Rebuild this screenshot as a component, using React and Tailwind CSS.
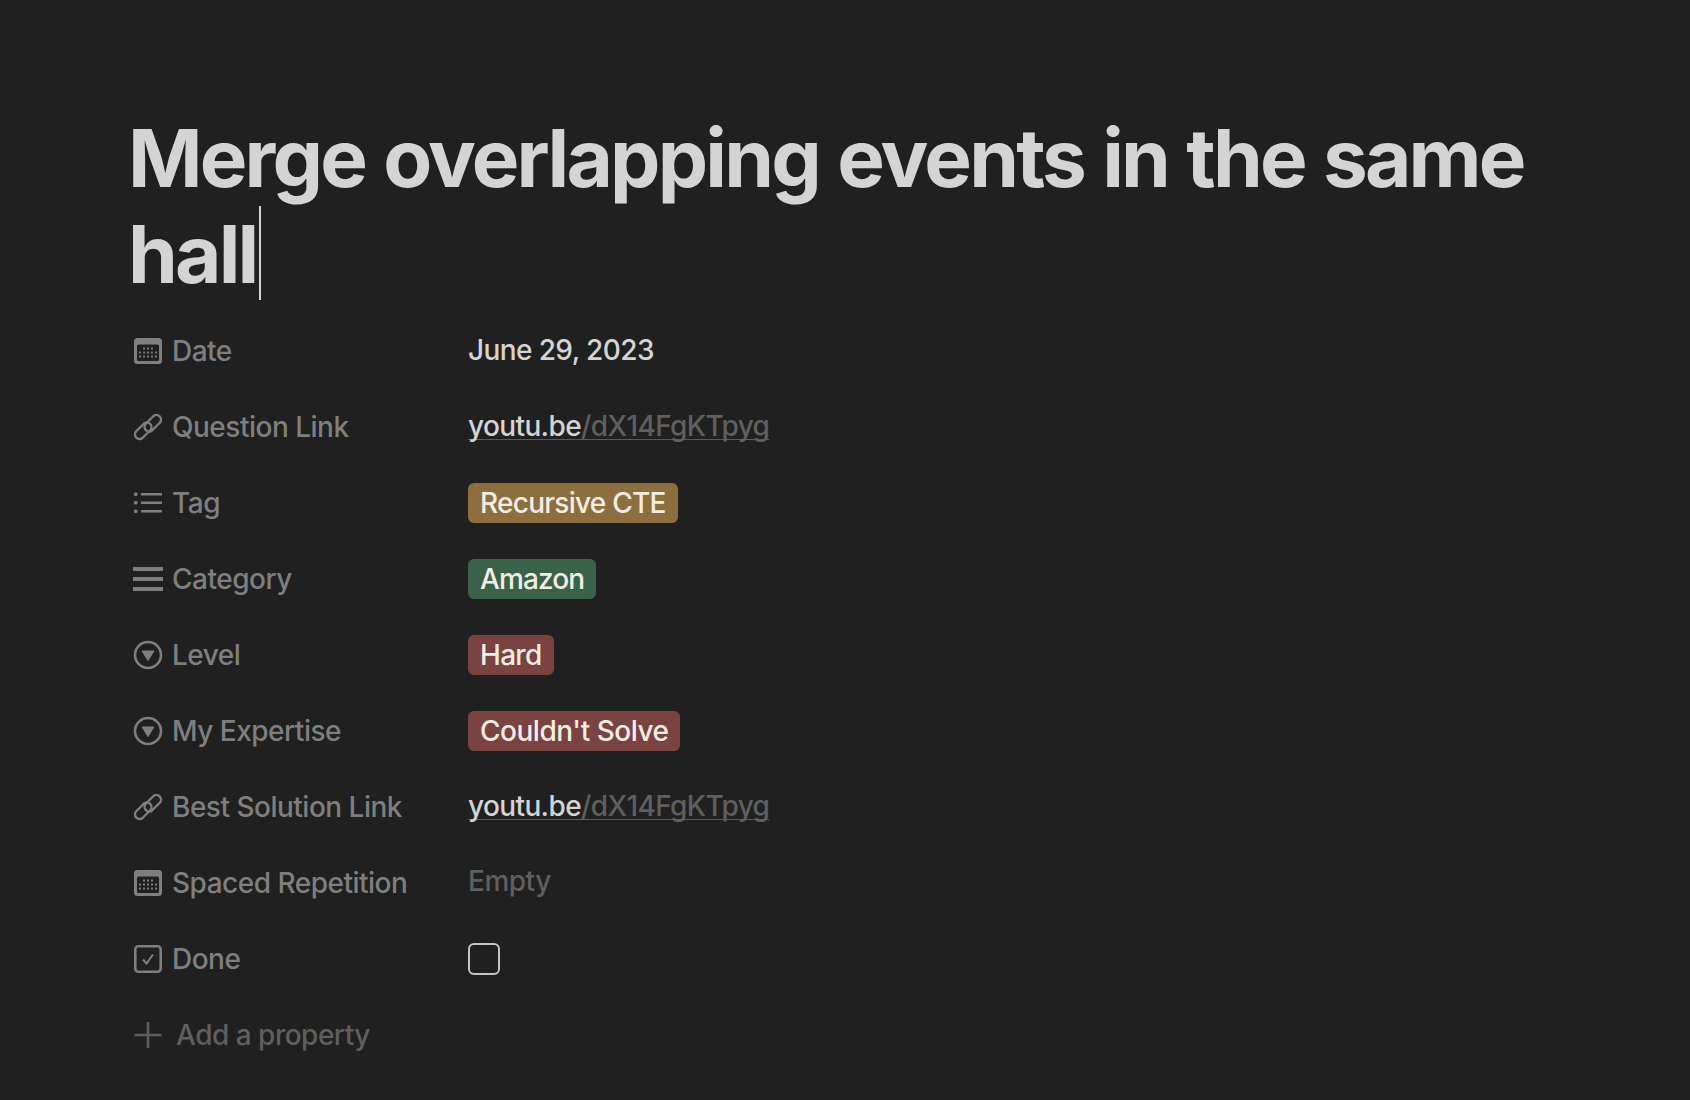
const CalendarIcon = () => (
  <svg width="30" height="28" viewBox="0 0 30 28" fill="none">
    <rect x="1" y="1" width="28" height="26" rx="3.5" fill="#7f7f7f" />
    <rect x="4" y="7.5" width="22" height="16.5" rx="1.5" fill="#202020" />
    {[11.5, 15.5, 19.5].map((y) =>
      [7, 11, 15, 19, 23].map((x) =>
        y === 11.5 && (x === 7 || x === 23) ? null : (
          <rect key={`${x}-${y}`} x={x - 1} y={y - 1} width="2" height="2" rx="0.5" fill="#7f7f7f" />
        )
      )
    )}
  </svg>
);

const LinkIcon = () => (
  <svg width="30" height="30" viewBox="0 0 30 30" fill="none" stroke="#7f7f7f" strokeWidth="2.4" strokeLinecap="round">
    <path d="M12.75 11.75 L20.25 4.25 A4.6 4.6 0 0 1 26.75 10.75 L19.25 18.25 A4.6 4.6 0 0 1 12.75 11.75 Z" />
    <path d="M3.25 19.25 L10.75 11.75 A4.6 4.6 0 0 1 17.25 18.25 L9.75 25.75 A4.6 4.6 0 0 1 3.25 19.25 Z" />
  </svg>
);

const ListIcon = () => (
  <svg width="30" height="22" viewBox="0 0 30 22" fill="#7f7f7f">
    <rect x="1" y="0.5" width="3.5" height="3.5" rx="1.2" />
    <rect x="1" y="9" width="3.5" height="3.5" rx="1.2" />
    <rect x="1" y="17.5" width="3.5" height="3.5" rx="1.2" />
    <rect x="8" y="1" width="21" height="2.5" />
    <rect x="8" y="9.5" width="21" height="2.5" />
    <rect x="8" y="18" width="21" height="2.5" />
  </svg>
);

const BarsIcon = () => (
  <svg width="30" height="24" viewBox="0 0 30 24" fill="#7f7f7f">
    <rect x="0" y="0" width="30" height="4" />
    <rect x="0" y="10" width="30" height="4" />
    <rect x="0" y="20" width="30" height="4" />
  </svg>
);

const SelectIcon = () => (
  <svg width="30" height="30" viewBox="0 0 30 30" fill="none">
    <circle cx="15" cy="15" r="13" stroke="#7f7f7f" strokeWidth="2.6" />
    <path d="M9 11 H21 L15 20.5 Z" fill="#7f7f7f" stroke="#7f7f7f" strokeLinejoin="round" />
  </svg>
);

const CheckIcon = () => (
  <svg width="30" height="28" viewBox="0 0 30 28" fill="none" stroke="#7f7f7f">
    <rect x="2.3" y="1.3" width="25.4" height="25.4" rx="3" strokeWidth="2.6" />
    <path d="M10 14.5 L13.5 18.5 L20 9.5" strokeWidth="2.1" />
  </svg>
);

const PlusIcon = () => (
  <svg width="30" height="28" viewBox="0 0 30 28" fill="none" stroke="#5f5f5f" strokeWidth="2.6">
    <path d="M1.5 14 H28.5 M15 1 V27" />
  </svg>
);

const Chip = ({ color, children }) => (
  <span className={`h-10 px-3 flex items-center rounded-[6px] text-[#f5ece4] ${color}`}>
    {children}
  </span>
);

const YoutuLink = () => (
  <span className="border-b border-[#5a5a5a] leading-[26px] h-[27px] -mt-px tracking-[-0.62px]">
    <span className="text-[#d4d4d4]">youtu.be</span>
    <span className="text-[#5f5f5f]">/dX14FgKTpyg</span>
  </span>
);

const rows = [
  { icon: <CalendarIcon />, label: "Date", value: <span className="text-[#d4d4d4] tracking-[-0.6px] -mt-0.5">June 29, 2023</span> },
  { icon: <LinkIcon />, label: "Question Link", value: <YoutuLink /> },
  { icon: <ListIcon />, label: "Tag", value: <Chip color="bg-[#8d6f3f] tracking-[-0.74px]">Recursive CTE</Chip> },
  { icon: <BarsIcon />, label: "Category", value: <Chip color="bg-[#3a6248] tracking-[-0.9px]">Amazon</Chip> },
  { icon: <SelectIcon />, label: "Level", value: <Chip color="bg-[#7a4240] tracking-[-0.7px]">Hard</Chip> },
  { icon: <SelectIcon />, label: "My Expertise", value: <Chip color="bg-[#7a4240] tracking-[-0.49px]">Couldn't Solve</Chip> },
  { icon: <LinkIcon />, label: "Best Solution Link", value: <YoutuLink /> },
  { icon: <CalendarIcon />, label: "Spaced Repetition", value: <span className="text-[#5f5f5f] -mt-1 tracking-[-0.5px]">Empty</span> },
  {
    icon: <CheckIcon />,
    label: "Done",
    value: <span className="w-8 h-8 rounded-md border-2 border-[#c4c4c4]" />,
  },
];

export default function App() {
  return (
    <div className="min-h-[1100px] bg-[#202020] pt-[110px] pl-[129px] font-['Inter',sans-serif] font-[450] text-[28px] overflow-hidden">
      <h1 className="-ml-px w-[1420px] text-[80px] leading-[96px] font-bold text-[#d4d4d4] tracking-[-2.8px] [word-spacing:2px]">
        Merge overlapping events in the same hall
        <span className="inline-block w-[2px] h-[94px] bg-[#d4d4d4] align-[-17px] ml-[3px]" />
      </h1>
      <div className="mt-[11px]">
        {rows.map((row) => (
          <div key={row.label} className="flex items-center h-[76px]">
            <div className="w-[339px] flex items-center text-[#7f7f7f] tracking-[-0.5px]">
              <span className="w-[43px] flex justify-start pl-[4px]">{row.icon}</span>
              {row.label}
            </div>
            <div className="flex items-center">{row.value}</div>
          </div>
        ))}
        <div className="flex items-center h-[76px] text-[#5f5f5f] tracking-[-0.5px]">
          <span className="w-[47px] flex justify-start pl-[4px]">
            <PlusIcon />
          </span>
          Add a property
        </div>
      </div>
    </div>
  );
}
